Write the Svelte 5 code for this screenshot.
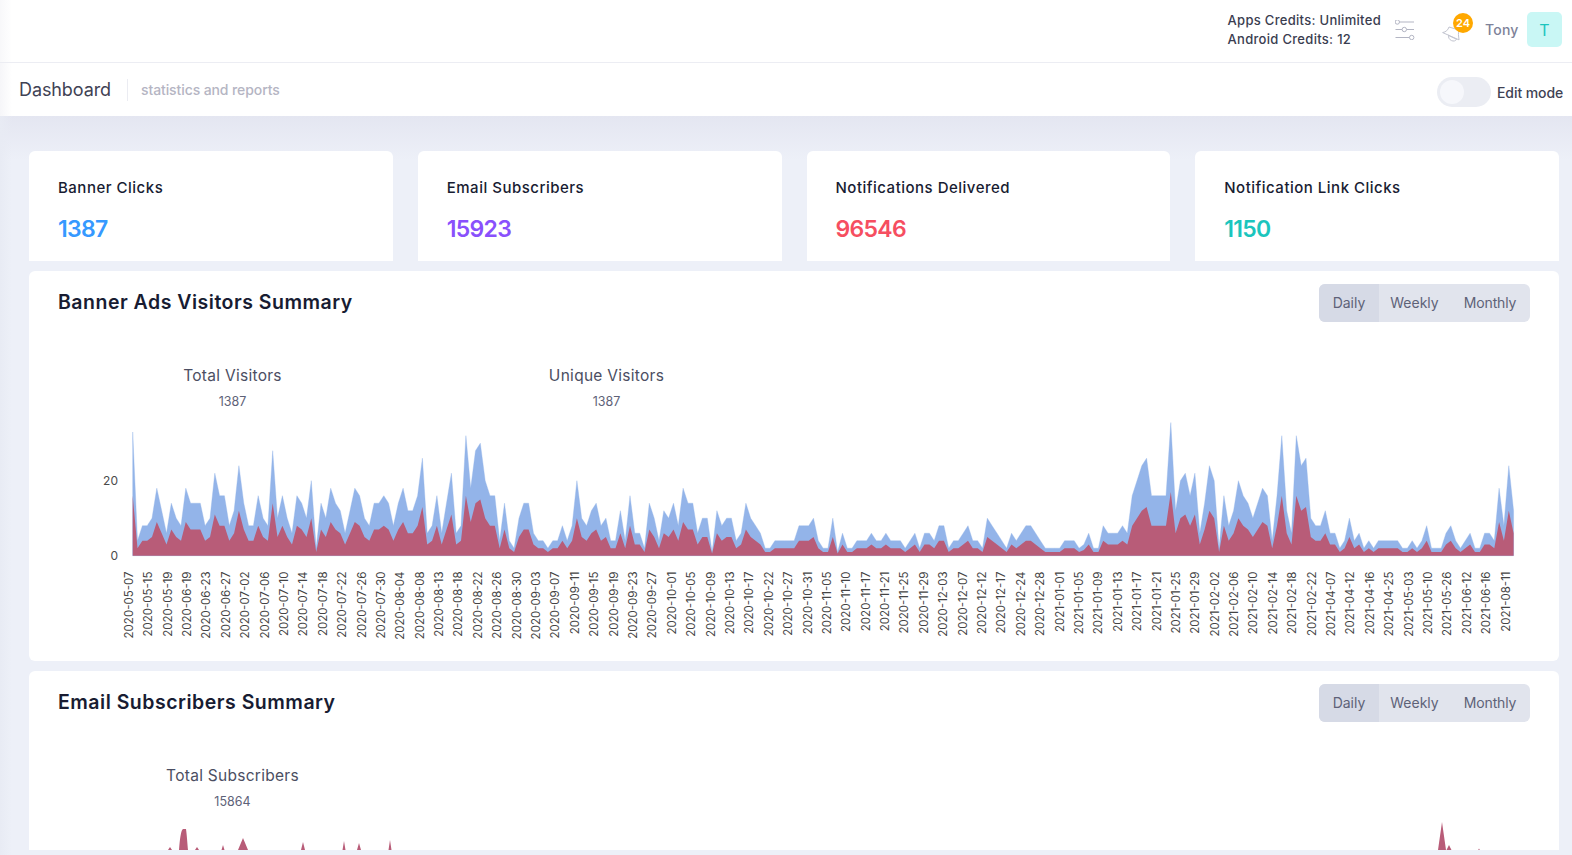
<script>
  const blue = [33,4,8,8,10,18,12,6,14,10,8,18,14,14,14,8,10,22,16,16,8,12,24,14,8,8,16,10,8,28,10,16,10,6,16,14,10,20,2,14,10,18,14,12,6,12,18,16,10,8,14,14,16,14,8,14,18,12,12,16,26,6,8,16,6,14,22,6,8,32,18,28,30,20,16,16,4,14,4,2,10,14,14,6,4,4,2,4,4,8,4,8,20,
    10,8,12,14,8,10,4,4,12,4,16,6,6,2,14,10,4,12,10,14,8,18,14,14,6,10,10,1,12,8,10,10,4,6,14,10,8,6,2,2,4,4,4,4,4,8,8,8,10,4,2,2,10,1,6,2,2,4,4,4,6,4,4,6,4,4,4,2,4,6,2,6,6,4,8,8,2,4,4,6,8,4,4,2,10,8,6,4,2,6,4,6,8,8,6,4,2,2,2,2,4,
    4,4,2,3,6,2,2,8,6,6,6,8,6,16,20,24,26,16,16,16,16,35.5,12,20,22,16,22,6,14,24,20,2,16,8,12,20,16,14,10,14,18,16,4,16,32,12,6,32,24,26,10,8,8,12,6,6,2,4,10,4,6,2,4,2,4,4,4,4,4,2,2,4,2,4,8,2,2,2,6,8,4,2,4,6,2,2,6,6,4,18,8,24,12];
  const red = blue.map((v, i) => (i === 0 ? 16 : v === 1 ? 0.6 : v === 35.5 ? 17 : v / 2));

  const x0 = 132.7, xEnd = 1513.6, base = 555.7, unit = 3.75;
  const step = (xEnd - x0) / (blue.length - 1);
  const px = (i) => +(x0 + i * step).toFixed(1);
  const py = (v) => +(base - v * unit).toFixed(1);
  const area = (data) =>
    `M${x0} ${base} ` + data.map((v, i) => `L${px(i)} ${py(v)}`).join(' ') + ` L${xEnd} ${base}Z`;
  const bluePath = area(blue);
  const redPath = area(red);

  const dates = [
    '2020-05-07','2020-05-15','2020-05-19','2020-06-19','2020-06-23','2020-06-27','2020-07-02','2020-07-06','2020-07-10','2020-07-14','2020-07-18','2020-07-22','2020-07-26','2020-07-30','2020-08-04','2020-08-08','2020-08-13','2020-08-18','2020-08-22','2020-08-26','2020-08-30','2020-09-03','2020-09-07','2020-09-11','2020-09-15','2020-09-19','2020-09-23','2020-09-27','2020-10-01','2020-10-05','2020-10-09','2020-10-13','2020-10-17','2020-10-22','2020-10-27','2020-10-31','2020-11-05','2020-11-10','2020-11-17','2020-11-21','2020-11-25','2020-11-29','2020-12-03','2020-12-07','2020-12-12','2020-12-17','2020-12-24','2020-12-28','2021-01-01','2021-01-05','2021-01-09','2021-01-13','2021-01-17','2021-01-21','2021-01-25','2021-01-29','2021-02-02','2021-02-06','2021-02-10','2021-02-14','2021-02-18','2021-02-22','2021-04-07','2021-04-12','2021-04-16','2021-04-25','2021-05-03','2021-05-10','2021-05-26','2021-06-12','2021-06-16','2021-08-11'
  ];
  const ticks = dates.map((d, i) => ({ d, x: +(128.3 + i * 19.39).toFixed(1) }));

  const stats = [
    { label: 'Banner Clicks', value: '1387', color: '#3699ff' },
    { label: 'Email Subscribers', value: '15923', color: '#8950fc' },
    { label: 'Notifications Delivered', value: '96546', color: '#f64e60' },
    { label: 'Notification Link Clicks', value: '1150', color: '#1bc5bd' }
  ];
  const peaks = [
    [170, 847, 2], [197, 847, 2], [223, 845, 1.5], [243, 838, 5], [303, 842, 2],
    [344, 841, 1.5], [359, 843, 2], [390, 840, 1.5], [1442, 822, 4], [1449, 845, 2.500], [1479, 848.500, 0.8]
  ];
  const subPath = peaks.map(([x, y, w]) => `M${x - w} 850L${x} ${y}L${x + w} 850Z`).join(' ');
</script>

<div class="page">
  <header class="top">
    <div class="credits">
      <div>Apps Credits: Unlimited</div>
      <div>Android Credits: 12</div>
    </div>
    <svg class="sliders" viewBox="0 0 20 20" width="20" height="20" fill="none" stroke="#b3b5c3" stroke-width="1">
      <path d="M4.600 2H19M0.500 9.500H7M11.600 9.500H19M0.500 17.500H14.400" />
      <circle cx="2.300" cy="2" r="2.200" />
      <circle cx="9.300" cy="9.500" r="2.200" />
      <circle cx="16.700" cy="17.500" r="2.200" />
    </svg>
    <div class="bell">
      <svg viewBox="0 0 20 18" width="20" height="18" fill="none" stroke="#c2c4cf" stroke-width="1" stroke-linejoin="round" stroke-linecap="round">
        <path d="M1 6.500C4 6 6 4 7 1L17 4C16 7 16.500 10 17 13.500Z" />
        <path d="M6.500 9.500L14.500 13.200C13.800 15 11.500 15.500 9.500 14.600C7.500 13.700 6 11.500 6.500 9.500Z" />
      </svg>
      <span class="badge">24</span>
    </div>
    <span class="name">Tony</span>
    <span class="avatar">T</span>
  </header>

  <div class="sub">
    <h1>Dashboard</h1>
    <span class="divider"></span>
    <span class="hint">statistics and reports</span>
    <div class="edit">
      <span class="switch"><span class="knob"></span></span>
      <span class="edit-label">Edit mode</span>
    </div>
  </div>

  <main>
    <section class="stats">
      {#each stats as s}
        <article class="stat">
          <div class="stat-label">{s.label}</div>
          <div class="stat-value" style="color:{s.color}">{s.value}</div>
        </article>
      {/each}
    </section>

    <section class="card first">
      <div class="card-head">
        <h2>Banner Ads Visitors Summary</h2>
        <div class="seg">
          <span class="active">Daily</span><span class="wk">Weekly</span><span class="mo">Monthly</span>
        </div>
      </div>
      <div class="legend two">
        <div class="leg"><div class="leg-title">Total Visitors</div><div class="leg-num">1387</div></div>
        <div class="leg"><div class="leg-title">Unique Visitors</div><div class="leg-num">1387</div></div>
      </div>
      <svg class="plot" viewBox="0 420 1559 240" width="1559" height="240">
        <path d={bluePath} fill="#93b4e9" stroke="#93b4e9" stroke-opacity="0.45" stroke-width="0.8" />
        <path d={redPath} fill="#b85c78" />
        <text class="ytick" x="118" y="485" text-anchor="end">20</text>
        <text class="ytick" x="118" y="560" text-anchor="end">0</text>
        {#each ticks as t}
          <text class="xtick" transform="translate({t.x + 4.500} 571.500) rotate(-90)" text-anchor="end">{t.d}</text>
        {/each}
      </svg>
    </section>

    <section class="card second">
      <div class="card-head">
        <h2>Email Subscribers Summary</h2>
        <div class="seg">
          <span class="active">Daily</span><span class="wk">Weekly</span><span class="mo">Monthly</span>
        </div>
      </div>
      <div class="legend one">
        <div class="leg"><div class="leg-title">Total Subscribers</div><div class="leg-num">15864</div></div>
      </div>
      <svg class="plot2" viewBox="0 820 1559 30" width="1559" height="30">
        <path d={subPath} fill="#b85c78" />
        <path d="M179 850C180 838 181 830 183 829L186 829C187 836 187.500 845 188 850Z" fill="#b85c78" />
      </svg>
    </section>
  </main>
</div>

<style>
  :global(body) {
    margin: 0;
    background: #edf0f8;
    overflow: hidden;
  }
  .page {
    height: 855px;
    overflow: hidden;
    font-family: Inter, "Noto Sans", sans-serif;
    color: #3f4254;
    background: linear-gradient(90deg, #e8ebf4, rgba(237, 240, 248, 0) 12px), linear-gradient(#e4e6f1 116px, #edf0f8 160px);
    position: relative;
  }
  .top {
    height: 62px;
    background: linear-gradient(90deg, #f8f8fa, #fff 12px);
    border-bottom: 1px solid #ecedf3;
    display: flex;
    align-items: center;
    justify-content: flex-end;
    padding-right: 10px;
  }
  .credits {
    font-size: 13px;
    font-weight: 500;
    line-height: 19px;
    color: #3a3d50;
    letter-spacing: 0.3px;
    margin-right: 13.500px;
    padding-bottom: 2px;
    white-space: nowrap;
  }
  .sliders {
    margin-right: 27.500px;
    margin-top: -2px;
  }
  .bell {
    position: relative;
    width: 20px;
    height: 18px;
    margin-top: 8px;
    margin-right: 23px;
  }
  .bell svg {
    display: block;
  }
  .badge {
    position: absolute;
    left: 11px;
    top: -13px;
    width: 20px;
    height: 20px;
    border-radius: 50%;
    background: #ffa800;
    color: #fff;
    font-size: 11px;
    font-weight: 600;
    text-align: center;
    line-height: 20px;
  }
  .name {
    font-size: 14px;
    font-weight: 500;
    color: #7e8299;
    margin-right: 11px;
    margin-top: -3px;
    width: 31px;
    letter-spacing: 0.2px;
  }
  .avatar {
    width: 35px;
    height: 35px;
    border-radius: 5px;
    background: #c9f7f5;
    color: #1bc5bd;
    font-size: 16px;
    display: grid;
    place-items: center;
    margin-top: -3px;
  }
  .sub {
    height: 53px;
    background: linear-gradient(90deg, #f6f6f9, #fff 12px);
    display: flex;
    align-items: center;
    padding: 0 10px 0 19px;
  }
  h1 {
    font-size: 18px;
    font-weight: 400;
    color: #3f4254;
    margin: 0;
    letter-spacing: -0.1px;
    width: 108px;
    padding-bottom: 1px;
  }
  .divider {
    width: 1px;
    height: 22px;
    background: #ebecf2;
  }
  .hint {
    font-size: 14px;
    font-weight: 500;
    color: #b5b5c3;
    margin-left: 13px;
    letter-spacing: -0.1px;
  }
  .edit {
    margin-left: auto;
    display: flex;
    align-items: center;
    gap: 6px;
    padding-top: 5px;
  }
  .switch {
    width: 54px;
    height: 30px;
    border-radius: 15px;
    background: #ebedf3;
    display: block;
    padding: 3px;
    box-sizing: border-box;
  }
  .knob {
    display: block;
    width: 24px;
    height: 24px;
    border-radius: 50%;
    background: #f6f7fb;
  }
  .edit-label {
    font-size: 14px;
    font-weight: 500;
    color: #3f4254;
    width: 65px;
    white-space: nowrap;
    letter-spacing: -0.08px;
  }
  main {
    padding: 35px 13px 0 29px;
    height: 734px;
    box-sizing: border-box;
    overflow: hidden;
  }
  .stats {
    display: grid;
    grid-template-columns: repeat(4, 1fr);
    gap: 25px;
    margin-bottom: 10px;
  }
  .stat {
    height: 110px;
    background: #fff;
    border-radius: 6px 6px 0 0;
    padding: 26px 29px 0;
    box-sizing: border-box;
  }
  .stat-label {
    font-size: 15px;
    font-weight: 500;
    color: #181c32;
    line-height: 22px;
    letter-spacing: 0.5px;
  }
  .stat-value {
    font-size: 23px;
    font-weight: 600;
    line-height: 30px;
    margin-top: 15px;
    letter-spacing: -0.7px;
  }
  .card {
    background: #fff;
    border-radius: 6px;
    position: relative;
  }
  .first {
    height: 390px;
    margin-bottom: 10px;
  }
  .second {
    height: 179px;
    border-radius: 6px 6px 0 0;
  }
  .plot {
    position: absolute;
    left: -29px;
    top: 149px;
    pointer-events: none;
  }
  .plot2 {
    position: absolute;
    left: -29px;
    top: 149px;
  }
  .card-head {
    display: flex;
    justify-content: space-between;
    padding: 13px 29px 0;
  }
  h2 {
    font-size: 19.500px;
    font-weight: 600;
    color: #181c32;
    margin: 5px 0 0;
    line-height: 26px;
    letter-spacing: 0.5px;
  }
  .seg {
    display: flex;
    height: 38px;
    border-radius: 6px;
    background: #e1e4ed;
    overflow: hidden;
    font-size: 14px;
    color: #5e6278;
    line-height: 38px;
    text-align: center;
  }
  .seg span {
    display: block;
  }
  .active {
    width: 60px;
    background: #d6dae6;
  }
  .wk {
    width: 71px;
  }
  .mo {
    width: 80px;
    letter-spacing: -0.15px;
  }
  .legend {
    position: relative;
    height: 60px;
  }
  .leg {
    position: absolute;
    top: 41.500px;
    text-align: center;
    transform: translateX(-50%);
    white-space: nowrap;
  }
  .two .leg:first-child {
    left: 203.500px;
  }
  .two .leg:last-child {
    left: 577.500px;
  }
  .one .leg {
    left: 203.500px;
  }
  .leg-title {
    font-size: 15.500px;
    color: #4b4e62;
    line-height: 24px;
    letter-spacing: 0.28px;
  }
  .leg-num {
    font-size: 12.500px;
    color: #5e6278;
    line-height: 18px;
    margin-top: 5px;
  }
  .ytick {
    font-family: Inter, sans-serif;
    font-size: 12px;
    fill: #4a4a4a;
  }
  .xtick {
    font-family: Inter, sans-serif;
    font-size: 11.500px;
    fill: #444;
  }
</style>
